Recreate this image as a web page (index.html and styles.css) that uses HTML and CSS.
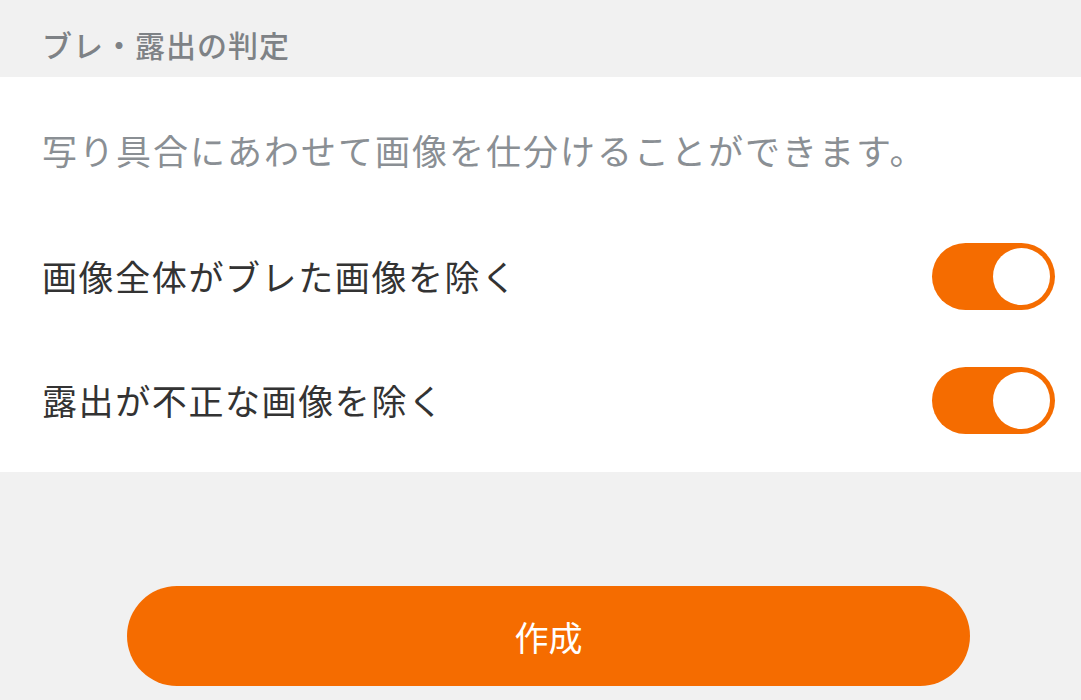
FILE: index.html
```html
<!DOCTYPE html>
<html lang="ja">
<head>
<meta charset="utf-8">
<title>ブレ・露出の判定</title>
<link rel="stylesheet" href="styles.css">
</head>
<body>
<div class="section-header">ブレ・露出の判定</div>
<div class="panel">
  <p class="desc">写り具合にあわせて画像を仕分けることができます。</p>
  <div class="row">
    <span class="label">画像全体がブレた画像を除く</span>
    <span class="toggle on"><span class="knob"></span></span>
  </div>
  <div class="row">
    <span class="label">露出が不正な画像を除く</span>
    <span class="toggle on"><span class="knob"></span></span>
  </div>
</div>
<div class="actions">
  <button class="primary">作成</button>
</div>
</body>
</html>
```
FILE: styles.css
```css
html, body {
  margin: 0;
  padding: 0;
}
body {
  background: #f1f1f1;
  font-family: "Noto Sans CJK JP", "Noto Sans", sans-serif;
  width: 1081px;
  height: 700px;
  overflow: hidden;
}
.section-header {
  box-sizing: border-box;
  height: 77px;
  padding: 26px 42px 0;
  font-size: 30px;
  line-height: 36px;
  font-weight: 500;
  letter-spacing: 1px;
  color: #7e8286;
}
.panel {
  background: #ffffff;
  height: 395px;
  box-sizing: border-box;
  padding-top: 49px;
}
.desc {
  margin: 0 0 40px;
  padding: 0 42px;
  font-size: 35px;
  line-height: 48px;
  color: #8a8f94;
  letter-spacing: 2px;
}
.row {
  height: 124px;
  display: flex;
  align-items: center;
  justify-content: space-between;
  padding: 0 26px 0 42px;
}
.label {
  font-size: 35px;
  line-height: 48px;
  color: #333333;
  letter-spacing: 1.6px;
}
.toggle {
  box-sizing: border-box;
  width: 123px;
  height: 67px;
  border-radius: 34px;
  background: #f56c00;
  padding: 5px;
  display: flex;
  justify-content: flex-end;
  align-items: center;
}
.knob {
  width: 57px;
  height: 57px;
  border-radius: 50%;
  background: #ffffff;
}
.actions {
  padding: 114px 0 0 127px;
}
.primary {
  width: 843px;
  height: 100px;
  border: 0;
  border-radius: 50px;
  background: #f56c00;
  color: #ffffff;
  font-family: "Noto Sans CJK JP", "Noto Sans", sans-serif;
  font-size: 34px;
  font-weight: 400;
  padding: 0;
}
```
